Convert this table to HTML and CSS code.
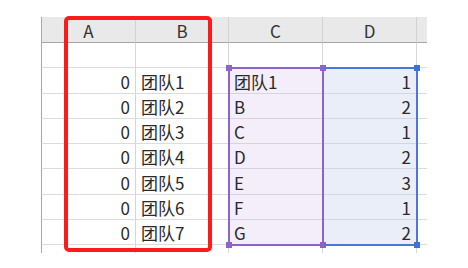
FILE: index.html
```html
<!DOCTYPE html>
<html lang="zh-CN">
<head>
<meta charset="utf-8">
<title>团队表</title>
<link rel="stylesheet" href="styles.css">
</head>
<body>
<div class="sheet">
  <div class="grid">
    <!-- column headers -->
    <div class="cell hd">A</div>
    <div class="cell hd">B</div>
    <div class="cell hd">C</div>
    <div class="cell hd">D</div>
    <div class="cell hd"></div>

    <!-- row 1 (empty) -->
    <div class="cell top"></div>
    <div class="cell top"></div>
    <div class="cell top"></div>
    <div class="cell top"></div>
    <div class="cell top"></div>

    <div class="cell num">0</div><div class="cell txt">团队1</div><div class="cell txt fill-c">团队1</div><div class="cell num fill-d">1</div><div class="cell"></div>
    <div class="cell num">0</div><div class="cell txt">团队2</div><div class="cell txt fill-c">B</div><div class="cell num fill-d">2</div><div class="cell"></div>
    <div class="cell num">0</div><div class="cell txt">团队3</div><div class="cell txt fill-c">C</div><div class="cell num fill-d">1</div><div class="cell"></div>
    <div class="cell num">0</div><div class="cell txt">团队4</div><div class="cell txt fill-c">D</div><div class="cell num fill-d">2</div><div class="cell"></div>
    <div class="cell num">0</div><div class="cell txt">团队5</div><div class="cell txt fill-c">E</div><div class="cell num fill-d">3</div><div class="cell"></div>
    <div class="cell num">0</div><div class="cell txt">团队6</div><div class="cell txt fill-c">F</div><div class="cell num fill-d">1</div><div class="cell"></div>
    <div class="cell num">0</div><div class="cell txt">团队7</div><div class="cell txt fill-c">G</div><div class="cell num fill-d">2</div><div class="cell"></div>

    <!-- partially visible next row -->
    <div class="cell"></div>
    <div class="cell"></div>
    <div class="cell"></div>
    <div class="cell"></div>
    <div class="cell"></div>

    <!-- selected ranges, laid over their grid areas -->
    <div class="sel sel-c">
      <span class="handle tl"></span><span class="handle tr"></span>
      <span class="handle bl"></span><span class="handle br"></span>
    </div>
    <div class="sel sel-d">
      <span class="handle tr"></span><span class="handle br"></span>
    </div>
  </div>

  <!-- red outline around columns A:B -->
  <div class="mark"></div>
</div>
</body>
</html>
```

FILE: styles.css
```css
html, body {
  margin: 0;
  background: #ffffff;
}

.sheet {
  position: relative;
  width: 468px;
  height: 268px;
  padding: 17px 0 0 41px;
  box-sizing: border-box;
  overflow: hidden;
  font-family: "Noto Sans CJK SC", "Noto Sans", sans-serif;
  font-size: 17px;
  color: #2a2a2a;
}

.grid {
  position: relative;
  display: grid;
  grid-template-columns: 94px 93px 94px 94px 11px;
  grid-template-rows: 25px 25px 26px 25px 25px 25px 26px 25px 25px 9px;
  width: 386px;
}

.cell {
  box-sizing: border-box;
  border-left: 1px solid #d6d6d6;
  border-top: 1px solid #dcdcdc;
  display: flex;
  align-items: flex-end;
  line-height: 22px;
  padding: 0 5px;
  white-space: nowrap;
  overflow: hidden;
}

.grid > .cell:nth-child(5n+1) {
  border-left-color: #a8a8a8;
}

.hd {
  background: #e9e9e9;
  border-top: none;
  border-left-color: #d2d2d2;
  justify-content: center;
  color: #333333;
}

.top {
  border-top-color: #a6a6a6;
}

.num {
  justify-content: flex-end;
}

.txt {
  justify-content: flex-start;
}

.fill-c {
  background: #f3eef9;
  border-top-color: #d8d4de;
}

.fill-d {
  background: #e9eef8;
  border-top-color: #d2d6de;
}

.sel {
  position: absolute;
  grid-row: 3 / 10;
  top: 0;
  bottom: -2px;
  box-sizing: border-box;
}

.sel-c {
  grid-column: 3 / 4;
  left: 0;
  right: -2px;
  border: 2px solid #8c64cc;
}

.sel-d {
  grid-column: 4 / 5;
  left: 2px;
  right: -2px;
  border: 2px solid #4a78d6;
  border-left: none;
}

.handle {
  position: absolute;
  width: 6px;
  height: 6px;
  background: #8c64cc;
}

.sel-d .handle {
  background: #3c72dc;
}

.handle.tl { left: -4px; top: -4px; }
.handle.tr { right: -4px; top: -4px; }
.handle.bl { left: -4px; bottom: -4px; }
.handle.br { right: -4px; bottom: -4px; }

.mark {
  position: absolute;
  left: 64px;
  top: 16px;
  width: 148px;
  height: 236px;
  box-sizing: border-box;
  border: 4px solid #fb1b1b;
  border-radius: 5px;
}
```
